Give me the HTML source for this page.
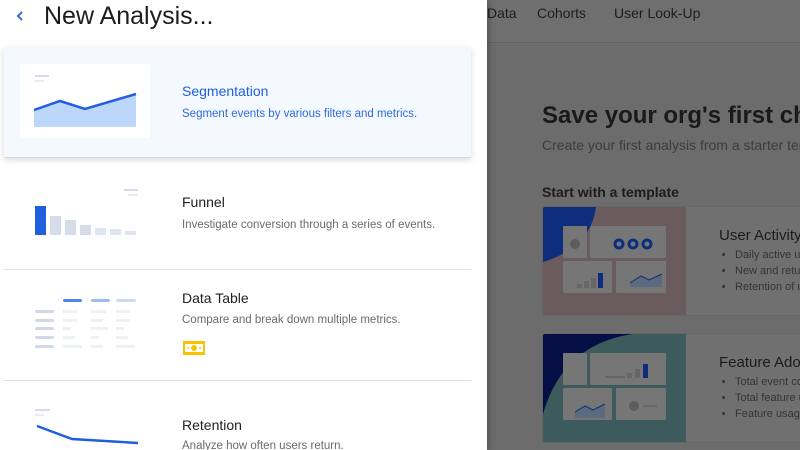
<!DOCTYPE html>
<html style="background:#6c6c6c;overflow:hidden;width:800px;height:450px"><head><style>
*{margin:0;padding:0;box-sizing:border-box}
body{width:800px;height:450px;overflow:hidden;background:#6c6c6c;font-family:"Liberation Sans","DejaVu Sans",sans-serif}
#root{position:relative;width:800px;height:450px;overflow:hidden;background:#6c6c6c}
.r{position:absolute}
.nav{left:487px;top:0;width:313px;height:43px;border-bottom:1px solid #626262;background:#6f6f6f}
.nav span{position:absolute;top:5px;font-size:14px;color:#1e1e1e}
.h1{left:542px;top:102px;font-size:24px;font-weight:bold;color:#1a1a1a;white-space:nowrap}
.sub{left:542px;top:137px;font-size:14px;color:#3c3c3c;white-space:nowrap}
.st{left:542px;top:184px;font-size:14px;font-weight:bold;color:#1c1c1c;white-space:nowrap}
.card{left:542px;width:258px;height:110px;background:#707070;border:1px solid #656565;border-right:none;border-radius:3px 0 0 3px;overflow:hidden}
.card .img{position:absolute;left:0;top:0;width:143px;height:110px;overflow:hidden}
.card .t{position:absolute;left:176px;top:20px;font-size:15px;color:#1c1c1c;white-space:nowrap}
.card ul{position:absolute;left:192px;top:40px;font-size:11px;color:#353535;line-height:16px;white-space:nowrap}
.mini{position:absolute;background:#767676;border-radius:1px}
.panel{left:0;top:0;width:487px;height:450px;background:#fff;box-shadow:2px 0 6px rgba(0,0,0,.25);overflow:hidden}
.item{position:absolute;left:4px;width:467px;border-bottom:1px solid #e0e0e0}
.item .tt{position:absolute;left:178px;font-size:14px;color:#222}
.item .d{position:absolute;left:178px;font-size:11.5px;color:#6b6b6b;white-space:nowrap}
</style></head><body><div id="root">
<div class="r nav"><span style="left:0">Data</span><span style="left:50px">Cohorts</span><span style="left:127px">User Look-Up</span></div>
<div class="r h1">Save your org's first chart</div>
<div class="r sub">Create your first analysis from a starter template</div>
<div class="r st">Start with a template</div>
<div class="r card" style="top:206px">
 <div class="img" style="background:#6a5b5e">
  <svg width="143" height="110" style="position:absolute;left:0;top:0"><path d="M0 0 H53 Q48 40 0 55Z" fill="#0e2d7c"/></svg>
  <div class="mini" style="left:20px;top:19px;width:24px;height:32px"></div>
  <div class="mini" style="left:47px;top:19px;width:76px;height:32px"></div>
  <div class="mini" style="left:20px;top:54px;width:49px;height:32px"></div>
  <div class="mini" style="left:73px;top:54px;width:50px;height:32px"></div>
  <svg width="143" height="110" style="position:absolute;left:0;top:0">
   <circle cx="32" cy="37" r="5" fill="#5d5d5d"/>
   <circle cx="76" cy="37" r="4" fill="none" stroke="#0e2d7c" stroke-width="3"/><circle cx="90" cy="37" r="4" fill="none" stroke="#0e2d7c" stroke-width="3"/><circle cx="104" cy="37" r="4" fill="none" stroke="#0e2d7c" stroke-width="3"/>
   <rect x="34" y="77" width="5" height="4" fill="#666"/><rect x="41" y="74" width="5" height="7" fill="#666"/><rect x="48" y="71" width="5" height="10" fill="#666"/><rect x="55" y="66" width="5" height="15" fill="#0e2d7c"/>
   <path d="M87 76 L98 69 L106 73 L119 67 V80 H87Z" fill="#5b6a7f"/><path d="M87 76 L98 69 L106 73 L119 67" stroke="#0e2d7c" fill="none"/>
  </svg>
 </div>
 <div class="t">User Activity</div>
 <ul><li>Daily active users</li><li>New and returning</li><li>Retention of users</li></ul>
</div>
<div class="r card" style="top:333px">
 <div class="img" style="background:#3d5a5c">
  <svg width="143" height="110" style="position:absolute;left:0;top:0"><path d="M0 0 H90 Q20 10 0 80Z" fill="#050f45"/></svg>
  <div class="mini" style="left:20px;top:19px;width:24px;height:32px"></div>
  <div class="mini" style="left:47px;top:19px;width:76px;height:32px"></div>
  <div class="mini" style="left:20px;top:54px;width:49px;height:32px"></div>
  <div class="mini" style="left:73px;top:54px;width:50px;height:32px"></div>
  <svg width="143" height="110" style="position:absolute;left:0;top:0">
   <rect x="100" y="30" width="5" height="14" fill="#0e2d7c"/><rect x="92" y="35" width="5" height="9" fill="#666"/><rect x="84" y="39" width="5" height="5" fill="#666"/><rect x="62" y="42" width="20" height="2" fill="#666"/>
   <path d="M32 78 L42 72 L50 76 L62 70 V84 H32Z" fill="#5b6a7f"/><path d="M32 78 L42 72 L50 76 L62 70" stroke="#0e2d7c" fill="none"/>
   <circle cx="91" cy="72" r="5" fill="#5d5d5d"/><rect x="100" y="71" width="14" height="2" fill="#666"/>
  </svg>
 </div>
 <div class="t">Feature Adoption</div>
 <ul><li>Total event count</li><li>Total feature users</li><li>Feature usage</li></ul>
</div>

<div class="r panel">
 <svg class="r" style="left:15px;top:10px" width="10" height="12"><path d="M7 2 L3 6 L7 10" stroke="#1f5fe0" stroke-width="1.8" fill="none"/></svg>
 <div class="r" style="left:44px;top:2px;font-size:25px;color:#1c1c1c">New Analysis...</div>

 <div class="item" style="top:47px;height:111px;background:#f4f8ff;box-shadow:0 2px 6px rgba(0,0,0,.15);border-bottom:1px solid #d8d8d8">
  <div class="r" style="left:16px;top:17px;width:130px;height:74px;background:#fff">
   <svg width="130" height="74"><rect x="15" y="11" width="14" height="2" fill="#d5dbe8"/><rect x="15" y="16" width="9" height="2" fill="#e6eaf2"/>
   <path d="M14 46 L40 37 L65 45 L116 30 V63 H14Z" fill="#bcd7fa"/><path d="M14 46 L40 37 L65 45 L116 30" stroke="#1f5fe0" stroke-width="2.5" fill="none"/></svg>
  </div>
  <div class="tt" style="top:36px;color:#1f5fe0">Segmentation</div>
  <div class="d" style="top:61px;color:#2f6ae0">Segment events by various filters and metrics.</div>
 </div>

 <div class="item" style="top:158px;height:112px">
  <svg class="r" style="left:28px;top:28px" width="110" height="52"><rect x="92" y="3" width="14" height="2" fill="#d5dbe8"/><rect x="96" y="8" width="10" height="2" fill="#e6eaf2"/>
   <rect x="3" y="20" width="11" height="29" fill="#1f5fe0"/><rect x="18" y="30" width="11" height="19" fill="#d6dce8"/><rect x="33" y="34" width="11" height="15" fill="#d6dce8"/><rect x="48" y="39" width="11" height="10" fill="#d6dce8"/><rect x="63" y="42" width="11" height="7" fill="#dfe4ee"/><rect x="78" y="43" width="11" height="6" fill="#dfe4ee"/><rect x="93" y="45" width="11" height="4" fill="#dfe4ee"/></svg>
  <div class="tt" style="top:36px">Funnel</div>
  <div class="d" style="top:61px">Investigate conversion through a series of events.</div>
 </div>

 <div class="item" style="top:270px;height:111px">
  <svg class="r" style="left:28px;top:27px" width="110" height="54">
   <rect x="31" y="2" width="19" height="3" rx="1.5" fill="#4f87e6"/><rect x="59" y="2" width="19" height="3" rx="1.5" fill="#9dbdf2"/><rect x="84" y="2" width="20" height="3" rx="1.5" fill="#c9dbf8"/>
   <g fill="#d2d9e6"><rect x="3" y="13" width="19" height="3" rx="1.5"/><rect x="3" y="22" width="19" height="3" rx="1.5"/><rect x="3" y="30" width="19" height="3" rx="1.5"/><rect x="3" y="39" width="19" height="3" rx="1.5"/><rect x="3" y="48" width="19" height="3" rx="1.5"/></g>
   <g fill="#edf0f5"><rect x="31" y="13" width="14" height="3"/><rect x="59" y="13" width="15" height="3"/><rect x="84" y="13" width="14" height="3"/><rect x="31" y="22" width="14" height="3"/><rect x="59" y="22" width="12" height="3"/><rect x="84" y="22" width="14" height="3"/><rect x="31" y="30" width="8" height="3"/><rect x="59" y="30" width="17" height="3"/><rect x="84" y="30" width="8" height="3"/><rect x="31" y="39" width="12" height="3"/><rect x="59" y="39" width="8" height="3"/><rect x="84" y="39" width="12" height="3"/><rect x="31" y="48" width="19" height="3"/><rect x="59" y="48" width="12" height="3"/><rect x="84" y="48" width="19" height="3"/></g></svg>
  <div class="tt" style="top:20px">Data Table</div>
  <div class="d" style="top:44px">Compare and break down multiple metrics.</div>
  <svg class="r" style="left:178px;top:70px" width="24" height="16"><rect x="1" y="1" width="22" height="14" fill="#f7c300"/><rect x="3" y="4" width="18" height="8" fill="#fff"/><circle cx="12" cy="8" r="3" fill="#f7c300"/><circle cx="6" cy="8" r="1" fill="#f7c300"/><circle cx="18" cy="8" r="1" fill="#f7c300"/></svg>
 </div>

 <div class="item" style="top:381px;height:69px;border:none">
  <svg class="r" style="left:28px;top:26px" width="110" height="40"><rect x="3" y="2" width="15" height="2" fill="#d5dbe8"/><rect x="3" y="7" width="9" height="2" fill="#e6eaf2"/>
   <path d="M5 19 L40 32 L106 36" stroke="#1f5fe0" stroke-width="2.5" fill="none"/></svg>
  <div class="tt" style="top:36px">Retention</div>
  <div class="d" style="top:59px">Analyze how often users return.</div>
 </div>
</div>
</div></body></html>
